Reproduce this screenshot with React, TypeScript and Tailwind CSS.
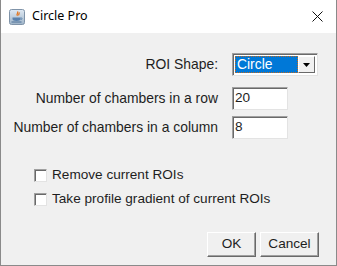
import React from "react";

const FONT = { fontFamily: '"Liberation Sans", Arial, sans-serif' };

function JavaIcon() {
  return (
    <svg width="16" height="16" viewBox="0 0 16 16">
      <defs>
        <linearGradient id="jbg" x1="0" y1="0" x2="0" y2="1">
          <stop offset="0" stopColor="#dfe9f3" />
          <stop offset="1" stopColor="#9fb4c8" />
        </linearGradient>
      </defs>
      <rect x="0.5" y="0.5" width="15" height="15" rx="2" fill="url(#jbg)" stroke="#7f93a8" />
      <path d="M8.5 2.5c1.5 1.2-1.8 2.4 0 4.2M10 3.5c0.8 1-1 1.6 0 2.8" stroke="#e2751e" strokeWidth="1.3" fill="none" />
      <path d="M3.5 8.5h8v1.5c0 1.2-1.5 2-4 2s-4-0.8-4-2z" fill="#5b82ad" />
      <path d="M11.5 9h1c0.8 0 0.8 1.4 0 1.4h-1" stroke="#5b82ad" strokeWidth="0.9" fill="none" />
      <path d="M2.5 13h10" stroke="#4a6e96" strokeWidth="1" />
    </svg>
  );
}

function Checkbox({ label }: { label: string }) {
  return (
    <div className="flex h-[20px] items-center">
      <span className="h-[13px] w-[13px] border-t border-l border-t-[#a0a0a0] border-l-[#a0a0a0] border-b border-r border-b-[#e3e3e3] border-r-[#e3e3e3] bg-white shadow-[inset_1px_1px_0_#696969]" />
      <span className="ml-[5px] text-[13.6px] text-[#1e1e1e]">{label}</span>
    </div>
  );
}

function Field({ value }: { value: string }) {
  return (
    <div className="flex h-[23px] w-[56px] items-center border-t border-l border-t-[#a0a0a0] border-l-[#a0a0a0] border-b border-r border-b-[#e3e3e3] border-r-[#e3e3e3] bg-white pl-[2px] text-[13.6px] text-[#1e1e1e] shadow-[inset_1px_1px_0_#696969]">
      {value}
    </div>
  );
}

function Btn({ label, w }: { label: string; w: string }) {
  return (
    <div
      className={`flex h-[25px] ${w} items-center justify-center border border-t-white border-l-white border-b-[#696969] border-r-[#696969] bg-[#f0f0f0] text-[13.6px] text-[#1e1e1e] shadow-[inset_-1px_-1px_0_#a0a0a0]`}
    >
      {label}
    </div>
  );
}

export default function App() {
  return (
    <div className="flex h-[266px] w-[337px] flex-col border-x border-b border-[#8a8a8a] bg-white" style={FONT}>
      {/* Title bar */}
      <div className="flex h-[33px] items-center bg-white">
        <div className="ml-[8px]">
          <JavaIcon />
        </div>
        <span className="ml-[7px] text-[12.5px] text-black" style={{ fontFamily: '"Noto Sans", "Open Sans", sans-serif' }}>
          Circle Pro
        </span>
        <div className="ml-auto mr-[13px]">
          <svg width="11" height="11" viewBox="0 0 11 11">
            <path d="M0.5 0.5L10.5 10.5M10.5 0.5L0.5 10.5" stroke="#111" strokeWidth="1" />
          </svg>
        </div>
      </div>

      {/* Body */}
      <div className="flex flex-1 flex-col bg-[#f0f0f0]">
        <div className="mt-[20px] grid grid-cols-[217px_auto] items-center gap-x-[14px] text-[13.9px] text-[#1e1e1e]">
          <span className="text-right">ROI Shape:</span>
          <div className="flex h-[23px] w-[86px] border-t border-l border-t-[#a0a0a0] border-l-[#a0a0a0] border-b border-r border-b-[#e3e3e3] border-r-[#e3e3e3] bg-white p-[2px] shadow-[inset_1px_1px_0_#696969]">
            <div className="flex flex-1 items-center border border-dotted border-[#c06a20] bg-[#0078d7] pl-[1px] text-white">
              Circle
            </div>
            <div className="flex w-[17px] items-center justify-center border border-t-white border-l-white border-b-[#696969] border-r-[#696969] bg-[#f0f0f0]">
              <svg width="7" height="4" viewBox="0 0 7 4">
                <path d="M0 0h7L3.5 4z" fill="#000" />
              </svg>
            </div>
          </div>

          <span className="mt-[11px] text-right">Number of chambers in a row</span>
          <div className="mt-[11px]">
            <Field value="20" />
          </div>

          <span className="mt-[6px] text-right">Number of chambers in a column</span>
          <div className="mt-[6px]">
            <Field value="8" />
          </div>
        </div>

        <div className="ml-[33px] mt-[26px] flex flex-col gap-[4px]">
          <Checkbox label="Remove current ROIs" />
          <Checkbox label="Take profile gradient of current ROIs" />
        </div>

        <div className="mr-[17px] mt-[23px] flex justify-end gap-[4px]">
          <Btn label="OK" w="w-[49px]" />
          <Btn label="Cancel" w="w-[59px]" />
        </div>
      </div>
    </div>
  );
}
